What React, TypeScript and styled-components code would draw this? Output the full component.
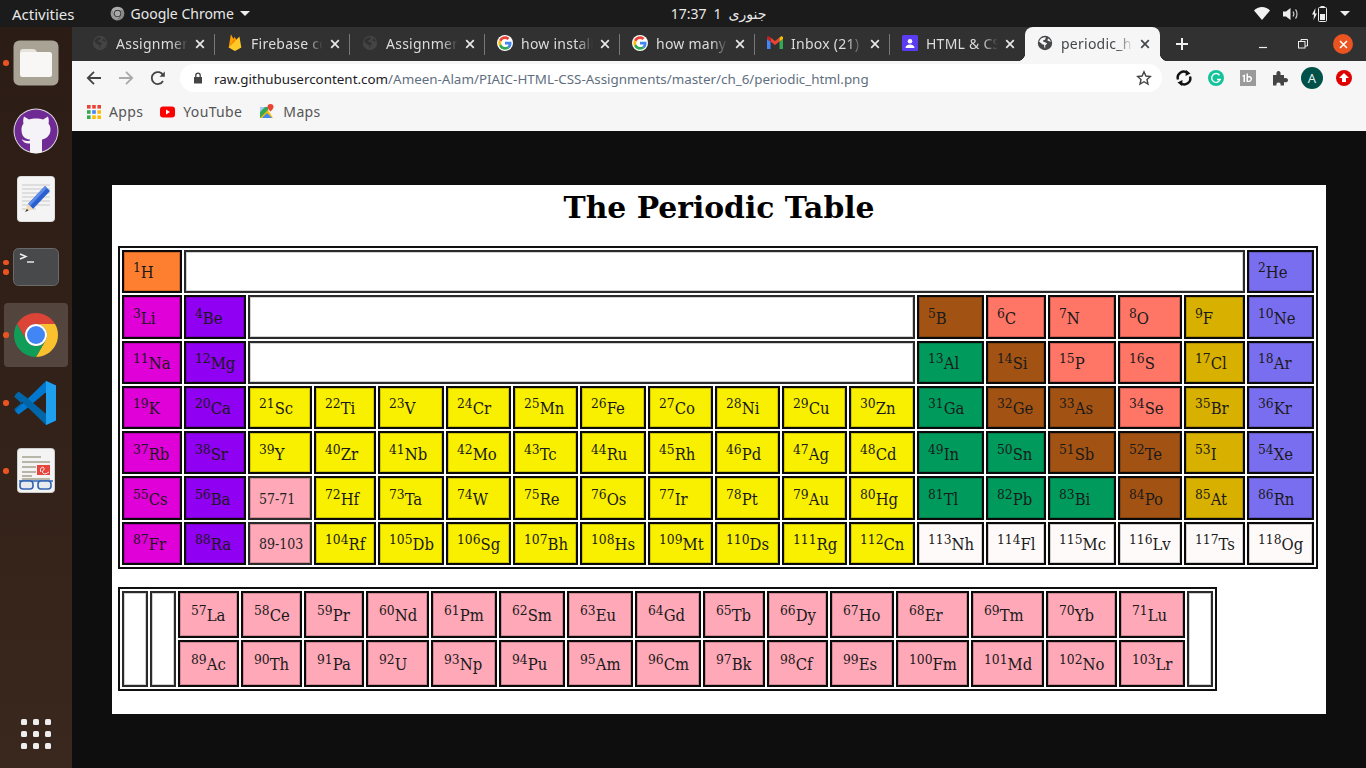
import React from "react";
import styled, { createGlobalStyle } from "styled-components";

const UI_FONT = `"Noto Sans", "DejaVu Sans", sans-serif`;

const Global = createGlobalStyle`
  html, body { margin: 0; padding: 0; background: #0e0e0e; }
  * { box-sizing: border-box; }
`;

const Screen = styled.div`
  width: 1366px; height: 768px; overflow: hidden;
  display: flex; flex-direction: column;
  font-family: ${UI_FONT};
`;

/* ---------- top bar ---------- */
const TopBar = styled.header`
  height: 27px; flex: none; background: #1b1b1b; color: #e8e8e8;
  font-size: 14px; display: grid; grid-template-columns: 1fr auto 1fr; align-items: center;
  padding: 0 16px 0 12px;
`;
const TopLeft = styled.div`display: flex; align-items: center; font-size: 15px;`;
const TopApp = styled.div`display: flex; align-items: center; gap: 6px; margin-left: 35px; font-size: 14px;`;
const Clock = styled.div`display: flex; align-items: center; gap: 7px; margin-left: 75px;`;
const TopRight = styled.div`display: flex; align-items: center; justify-content: flex-end; gap: 13px;`;
const Caret = styled.span`
  width: 0; height: 0; border-left: 5px solid transparent; border-right: 5px solid transparent;
  border-top: 5px solid #eee; display: inline-block;
`;

const Body = styled.div`flex: 1; display: flex; min-height: 0;`;

/* ---------- dock ---------- */
const Dock = styled.nav`
  width: 72px; flex: none; background: linear-gradient(180deg, #2b1c15 0%, #3a271d 100%);
  display: flex; flex-direction: column; align-items: center; padding-top: 4px;
`;
const DockItem = styled.div<{ $active?: boolean }>`
  position: relative; width: 64px; height: 64px; margin-bottom: 4px; border-radius: 4px;
  display: flex; align-items: center; justify-content: center;
  background: ${p => (p.$active ? "rgba(255,255,255,.17)" : "transparent")};
`;
const DockDots = styled.div`
  position: absolute; left: -1px; top: 0; bottom: 0; display: flex; flex-direction: column;
  justify-content: center; gap: 4px;
`;
const DockDot = styled.i`display: block; width: 5.5px; height: 5.5px; border-radius: 50%; background: #e95420;`;
const ShowApps = styled.div`
  margin-top: auto; margin-bottom: 19px; display: grid; grid-template-columns: repeat(3, 6px);
  gap: 6px;
`;
const ShowAppsDot = styled.i`display: block; height: 6px; border-radius: 1.5px; background: #eee;`;

/* ---------- browser ---------- */
const Browser = styled.main`flex: 1; display: flex; flex-direction: column; min-width: 0;`;
const TabStrip = styled.div`
  height: 34px; flex: none; background: #323132; display: flex; align-items: stretch; padding-left: 8px;
  position: relative;
`;
const Tab = styled.div<{ $active?: boolean; $noSep?: boolean }>`
  width: 135px; position: relative; display: flex; align-items: center; padding-left: 12px; padding-bottom: 2px;
  border-radius: 8px 8px 0 0; color: ${p => (p.$active ? "#45474a" : "#dcdcdc")}; font-size: 14px;
  background: ${p => (p.$active ? "#f6f6f6" : "transparent")};
  &::after {
    content: ""; position: absolute; right: 0; top: 7px; bottom: 6px; width: 1px;
    background: ${p => (p.$noSep || p.$active ? "transparent" : "#77767a")};
  }
`;
const Flare = styled.i<{ $side: "left" | "right" }>`
  position: absolute; bottom: 0; width: 8px; height: 8px;
  ${p => (p.$side === "left"
    ? "left: -8px; background: radial-gradient(circle at 0 0, transparent 8px, #f6f6f6 8.5px);"
    : "right: -8px; background: radial-gradient(circle at 100% 0, transparent 8px, #f6f6f6 8.5px);")}
`;
const Fav = styled.span`width: 16px; height: 16px; flex: none; display: flex; align-items: center; justify-content: center;`;
const TabTitle = styled.span`
  margin-left: 8px; width: 72px; overflow: hidden; white-space: nowrap; letter-spacing: .25px;
  -webkit-mask-image: linear-gradient(90deg, #000 78%, transparent 100%);
  mask-image: linear-gradient(90deg, #000 78%, transparent 100%);
`;
const TabClose = styled.span`position: absolute; left: 114px; top: 11px; width: 12px; height: 12px; display: flex;`;
const NewTab = styled.div`width: 44px; display: flex; align-items: center; justify-content: center;`;
const WinControls = styled.div`
  position: absolute; right: 13px; top: 0; bottom: 0; display: flex; align-items: center; gap: 20px;
`;
const WinBtn = styled.span`width: 20px; height: 20px; display: flex; align-items: center; justify-content: center;`;
const CloseBtn = styled(WinBtn)`border-radius: 50%; background: #e95420;`;

const Toolbar = styled.div`
  height: 34px; flex: none; background: #f6f6f6; display: flex; align-items: center; padding-left: 6px;
`;
const NavBtn = styled.span`width: 32px; height: 32px; display: flex; align-items: center; justify-content: center;`;
const Omnibox = styled.div`
  width: 982px; height: 28px; margin-left: 6px; border-radius: 14px; background: #fff;
  display: flex; align-items: center; padding: 0 10px 0 12px; font-size: 13.4px; color: #5f6f80;
`;
const Host = styled.span`color: #1c2024;`;
const UrlText = styled.span`margin-left: 10px; padding-top: 1px; flex: 1; white-space: nowrap;`;
const Exts = styled.div`display: flex; align-items: center; margin-left: 6px;`;
const Ext = styled.span`width: 32px; height: 32px; display: flex; align-items: center; justify-content: center;`;
const Avatar = styled.span`
  width: 22px; height: 22px; border-radius: 50%; background: #00514a; color: #e6f0ee;
  font-size: 13px; display: flex; align-items: center; justify-content: center;
`;
const Bookmarks = styled.div`
  height: 36px; flex: none; background: #f6f6f6; display: flex; align-items: center; padding: 0 0 3px 15px;
  color: #555; font-size: 14px; letter-spacing: .35px; gap: 17px;
`;
const Bookmark = styled.div`display: flex; align-items: center; gap: 8px;`;

/* ---------- image viewer ---------- */
const Viewer = styled.section`
  flex: 1; background: #0e0e0e; display: flex; align-items: center; justify-content: center;
`;
const Sheet = styled.div`
  width: 1214px; height: 529px; background: #fff; padding: 0 6px;
  font-family: "DejaVu Serif Condensed", "DejaVu Serif", "Liberation Serif", serif; color: #1a1a1a;
`;
const Title = styled.h1`
  margin: 0; height: 61px; padding-bottom: 16px; display: flex; align-items: center; justify-content: center;
  font-family: "DejaVu Serif", serif;
  font-size: 29.8px; font-weight: 700; color: #000; width: 1202px;
`;
const PTable = styled.div<{ $cols: number[]; $rows: string }>`
  grid-template-columns: ${p => p.$cols.map(c => `${c}px`).join(" ")};
  grid-template-rows: ${p => p.$rows};
  gap: 2px; padding: 2px; border: 2px solid #111;
  outline: 1px solid rgba(0,0,0,.15); outline-offset: -1px;
`;
const MainTable = styled(PTable)`display: grid; width: 1200px;`;
const LowerTable = styled(PTable)`display: grid; width: 1099px; margin-top: 18px;`;
const Cell = styled.div<{ $bg: string; $span?: number; $rowSpan?: number; $pad?: number; $soft?: boolean }>`
  grid-column: span ${p => p.$span ?? 1};
  grid-row: span ${p => p.$rowSpan ?? 1};
  background: ${p => p.$bg};
  border: 2px solid ${p => (p.$soft ? "#2a2a2a" : "#0a0a0a")};
  box-shadow: inset 0 0 0 1px rgba(0,0,0,.18);
  display: flex; align-items: center; white-space: nowrap;
  padding-left: ${p => p.$pad ?? 9}px; padding-top: 4px; font-size: 16.5px; line-height: 1;
`;
const Sup = styled.sup`font-size: 13.7px; line-height: 0; vertical-align: 6px;`;
const Plain = styled.span`font-size: 14px; color: #222; margin-top: -3px;`;

/* ---------- data ---------- */
const C = {
  orange: "#ff7f30", magenta: "#e000d8", purple: "#9000f2", yellow: "#f9f000", green: "#009b5c",
  brown: "#a25213", salmon: "#ff7566", gold: "#d8b000", blue: "#7a6ef0", pink: "#ffa8b8",
  snow: "#fffafa", blank: "#fff",
};
const G = (c: string, ...items: string[]) => items.map(s => [s, c] as [string, string]);

type Item = [string, string] | { blank: number } | { range: string };
const mainRows: Item[][] = [
  [["1 H", C.orange], { blank: 16 }, ["2 He", C.blue]],
  [["3 Li", C.magenta], ["4 Be", C.purple], { blank: 10 }, ["5 B", C.brown], ["6 C", C.salmon], ["7 N", C.salmon], ["8 O", C.salmon], ["9 F", C.gold], ["10 Ne", C.blue]],
  [["11 Na", C.magenta], ["12 Mg", C.purple], { blank: 10 }, ["13 Al", C.green], ["14 Si", C.brown], ["15 P", C.salmon], ["16 S", C.salmon], ["17 Cl", C.gold], ["18 Ar", C.blue]],
  [["19 K", C.magenta], ["20 Ca", C.purple], ...G(C.yellow, "21 Sc", "22 Ti", "23 V", "24 Cr", "25 Mn", "26 Fe", "27 Co", "28 Ni", "29 Cu", "30 Zn"), ["31 Ga", C.green], ["32 Ge", C.brown], ["33 As", C.brown], ["34 Se", C.salmon], ["35 Br", C.gold], ["36 Kr", C.blue]],
  [["37 Rb", C.magenta], ["38 Sr", C.purple], ...G(C.yellow, "39 Y", "40 Zr", "41 Nb", "42 Mo", "43 Tc", "44 Ru", "45 Rh", "46 Pd", "47 Ag", "48 Cd"), ["49 In", C.green], ["50 Sn", C.green], ["51 Sb", C.brown], ["52 Te", C.brown], ["53 I", C.gold], ["54 Xe", C.blue]],
  [["55 Cs", C.magenta], ["56 Ba", C.purple], { range: "57-71" }, ...G(C.yellow, "72 Hf", "73 Ta", "74 W", "75 Re", "76 Os", "77 Ir", "78 Pt", "79 Au", "80 Hg"), ["81 Tl", C.green], ["82 Pb", C.green], ["83 Bi", C.green], ["84 Po", C.brown], ["85 At", C.gold], ["86 Rn", C.blue]],
  [["87 Fr", C.magenta], ["88 Ra", C.purple], { range: "89-103" }, ...G(C.yellow, "104 Rf", "105 Db", "106 Sg", "107 Bh", "108 Hs", "109 Mt", "110 Ds", "111 Rg", "112 Cn"), ...G(C.snow, "113 Nh", "114 Fl", "115 Mc", "116 Lv", "117 Ts", "118 Og")],
];
const lanth = "57 La,58 Ce,59 Pr,60 Nd,61 Pm,62 Sm,63 Eu,64 Gd,65 Tb,66 Dy,67 Ho,68 Er,69 Tm,70 Yb,71 Lu".split(",");
const actin = "89 Ac,90 Th,91 Pa,92 U,93 Np,94 Pu,95 Am,96 Cm,97 Bk,98 Cf,99 Es,100 Fm,101 Md,102 No,103 Lr".split(",");
const mainCols = [60,62,64,62,66,65,65,66,65,65,65,66,67,60,68,64,61,67];
const lowerCols = [26,26,61,61,60,63,66,66,66,66,62,61,64,73,73,71,66,26];

const Element: React.FC<{ s: string; bg: string; pad?: number }> = ({ s, bg, pad }) => {
  const [n, sym] = s.split(" ");
  return <Cell $bg={bg} $pad={pad}><span><Sup>{n}</Sup>{sym}</span></Cell>;
};

/* ---------- icons ---------- */
const Chrome: React.FC<{ size: number; gray?: boolean }> = ({ size, gray }) => (
  <svg width={size} height={size} viewBox="0 0 48 48">
    <path fill={gray ? "#aaa" : "#db4437"} d="M4.95 13A22 22 0 0 1 43.05 13L24 13A11 11 0 0 0 14.47 29.5Z" />
    <path fill={gray ? "#888" : "#fbc02d"} d="M43.05 13A22 22 0 0 1 24 46L33.53 29.5A11 11 0 0 0 24 13Z" />
    <path fill={gray ? "#999" : "#0f9d58"} d="M24 46A22 22 0 0 1 4.95 13L14.47 29.5A11 11 0 0 0 33.53 29.5Z" />
    <circle cx="24" cy="24" r="11" fill={gray ? "#333" : "#fff"} />
    <circle cx="24" cy="24" r="9" fill={gray ? "#aaa" : "#4285f4"} />
  </svg>
);
const Globe: React.FC<{ c: string; cut: string }> = ({ c, cut }) => (
  <svg width="16" height="16" viewBox="0 0 16 16">
    <circle cx="8" cy="8" r="7.2" fill={c} />
    <path fill={cut} d="M7 2.2 4 3.4 2 6.4l3.6 3.2 1.6.2v2.2l1 1.6V10.6l2-2.2-2.6-1.4L6 6.6V5.4l2-.6 1-2.2zM11 3.6l-.6 2 2.4 1 1 .2c-.2-1.4-1.4-2.6-2.8-3.2z" />
  </svg>
);
const GIcon = () => (
  <svg width="16" height="16" viewBox="0 0 48 48">
    <circle cx="24" cy="24" r="24" fill="#fff" />
    <path fill="#ea4335" d="M24 12c3 0 5.600 1 7.700 3l5.700-5.700C33.900 6 29.400 4 24 4 16.200 4 9.500 8.500 6.200 15l6.700 5.200C14.500 15.400 18.900 12 24 12z" />
    <path fill="#4285f4" d="M43.500 24.500c0-1.400-.1-2.700-.4-4H24v8h11c-.5 2.500-1.900 4.700-4.100 6.100l6.400 5c3.800-3.500 6.200-8.700 6.200-15.100z" />
    <path fill="#fbbc05" d="M12.900 28.700c-.4-1.300-.7-2.800-.7-4.300s.3-3 .7-4.300L6.200 15C4.800 17.800 4 20.800 4 24s.8 6.200 2.200 9l6.700-4.300z" />
    <path fill="#34a853" d="M24 44c5.400 0 9.900-1.800 13.300-4.800l-6.400-5c-1.800 1.200-4.100 1.900-6.900 1.900-5.100 0-9.500-3.400-11.100-8.100L6.200 33C9.500 39.500 16.200 44 24 44z" />
  </svg>
);
const XMark: React.FC<{ c: string; s?: number }> = ({ c, s = 12 }) => (
  <svg width={s} height={s} viewBox="0 0 12 12"><path d="M2.200 2.200l7.600 7.600M9.800 2.200l-7.600 7.600" stroke={c} strokeWidth="1.700" /></svg>
);
const Firebase = () => (
  <svg width="16" height="18" viewBox="0 0 16 20">
    <path fill="#ffa000" d="M1 15 3.300 1.200c.1-.3.500-.4.600-.1L6.300 5.500 7.300 3.600c.1-.2.400-.2.500 0L15 15z" />
    <path fill="#f57c00" d="M9 9 7.300 5.500 1 15z" />
    <path fill="#ffca28" d="M15 15 13 3.400c0-.3-.4-.4-.6-.2L1 15l6.300 3.600c.4.200.9.200 1.300 0z" />
  </svg>
);
const Gmail = () => (
  <svg width="16" height="14" viewBox="0 0 16 14">
    <path fill="#4285f4" d="M0 3v10h3.500V5.500z" />
    <path fill="#34a853" d="M12.500 5.500V13H16V3z" />
    <path fill="#ea4335" d="M3.500 5.500 8 9l4.500-3.500V1.500L8 5 3.500 1.500z" />
    <path fill="#c5221f" d="M0 3l3.500 2.500v-4L2 .5C1 0 0 .8 0 2z" />
    <path fill="#fbbc04" d="M16 3l-3.500 2.500v-4l1.500-1c1-.5 2 .3 2 1.500z" />
  </svg>
);
const PurpleBadge = () => (
  <svg width="16" height="16" viewBox="0 0 16 16">
    <rect width="16" height="16" rx="1.500" fill="#5b3cf0" />
    <circle cx="8" cy="6.300" r="2.300" fill="#fff" />
    <path fill="#fff" d="M3.500 13c0-2.300 2-3.500 4.500-3.500s4.500 1.200 4.500 3.500z" />
  </svg>
);
const Wifi = () => (<svg width="16" height="13" viewBox="0 0 16 13"><path fill="#f2f2f2" d="M0 3.500C2 1.500 5 0 8 0s6 1.500 8 3.500L8 13z" /></svg>);
const Speaker = () => (
  <svg width="16" height="14" viewBox="0 0 16 14">
    <path fill="#eee" d="M0 4.500h3L7.500 1v12L3 9.500H0z" />
    <path fill="none" stroke="#ccc" strokeWidth="1.200" d="M10 4.500c1 1.400 1 3.600 0 5M12.500 2.500c2 2.400 2 6.600 0 9" />
  </svg>
);
const Battery = () => (
  <svg width="15" height="16" viewBox="0 0 15 16">
    <path fill="#eee" d="M3.500 2 0 8.500h2L1.500 14 5 7.500H3z" />
    <rect x="6.500" y="1.500" width="8" height="14" rx="1" fill="none" stroke="#eee" />
    <rect x="8.500" y="0" width="4" height="1.500" fill="#eee" />
    <rect x="8" y="8" width="5" height="6" fill="#eee" />
  </svg>
);
const LockIcon = () => (
  <svg width="12" height="12" viewBox="0 0 12 12">
    <path fill="#444" d="M2 5h8v6.500H2z" />
    <path fill="none" stroke="#444" strokeWidth="1.300" d="M3.800 5V3.400a2.200 2.200 0 0 1 4.400 0V5" />
  </svg>
);
const Arrow: React.FC<{ c: string; flip?: boolean }> = ({ c, flip }) => (
  <svg width="16" height="16" viewBox="0 0 16 16" style={flip ? { transform: "scaleX(-1)" } : undefined}>
    <path fill="none" stroke={c} strokeWidth="1.800" d="M15 8H2M8 1.800 1.800 8 8 14.200" />
  </svg>
);
const Reload = () => (
  <svg width="16" height="16" viewBox="0 0 16 16">
    <path fill="none" stroke="#444" strokeWidth="1.800" d="M13 11a6 6 0 1 1 .2-5.500" />
    <path fill="#444" d="M14.800 1.500v5.300H9.500z" />
  </svg>
);
const Star = () => (
  <svg width="16" height="16" viewBox="0 0 16 16">
    <path fill="none" stroke="#444" strokeWidth="1.400" d="M8 1.800l1.900 4.200 4.500.5-3.400 3 1 4.500L8 11.700 4 14l1-4.500-3.400-3 4.500-.5z" />
  </svg>
);
const LoopExt = () => (
  <svg width="18" height="18" viewBox="0 0 18 18" fill="none" stroke="#111" strokeWidth="2.400">
    <path d="M3 10.500A6 6 0 0 1 12.500 4" />
    <path d="M15 7.500A6 6 0 0 1 5.500 14" />
    <path fill="#111" stroke="none" d="M11 1l4.500 3.500L10.500 7zM7 17l-4.500-3.500 5-2.500z" />
  </svg>
);
const Grammarly = () => (
  <svg width="16" height="16" viewBox="0 0 16 16">
    <circle cx="8" cy="8" r="8" fill="#15c39a" />
    <path fill="none" stroke="#fff" strokeWidth="1.400" d="M11.500 5.200A4.400 4.400 0 1 0 12.200 9.500H9" />
  </svg>
);
const OneB = () => (
  <svg width="16" height="16" viewBox="0 0 16 16">
    <rect width="16" height="16" fill="#9a9a9a" />
    <path fill="#fff" d="M2.500 5.500 5 4.500V12H3.500V6.500l-1 .3zM6.500 3.500H8v3c1.800-1 4-.2 4 2.200 0 2-1.700 3.400-3.800 3.400-.6 0-1.200-.1-1.700-.2zM8 8v2.800c1.500.3 2.500-.6 2.500-1.800 0-1.300-1.400-1.800-2.500-1z" />
  </svg>
);
const Puzzle = () => (
  <svg width="16" height="16" viewBox="0 0 16 16">
    <path fill="#444" d="M1 5h3.500C4 2.500 5 1 6.500 1S9 2.500 8.500 5H12v3.300c2.500-.6 4 .4 4 1.900s-1.500 2.500-4 1.900V15.500H8.500c.5-2-.5-3-2-3s-2.500 1-2 3H1z" />
  </svg>
);
const RedUp = () => (
  <svg width="16" height="16" viewBox="0 0 16 16">
    <circle cx="8" cy="8" r="8" fill="#e00000" />
    <path fill="#fff" d="M8 3l5 5h-3v4H6V8H3z" />
  </svg>
);
const AppsIcon = () => {
  const cols = ["#ea4335", "#ea4335", "#ea4335", "#34a853", "#4285f4", "#fbbc05", "#34a853", "#fbbc05", "#fbbc05"];
  return (
    <svg width="14" height="14" viewBox="0 0 14 14">
      {cols.map((c, i) => <rect key={i} x={(i % 3) * 5.2} y={Math.floor(i / 3) * 5.2} width="3.600" height="3.600" fill={c} />)}
    </svg>
  );
};
const YouTube = () => (
  <svg width="15" height="12" viewBox="0 0 15 12">
    <rect width="15" height="11" y=".5" rx="3" fill="#f00" />
    <path fill="#fff" d="M6 3.500 10 6 6 8.500z" />
  </svg>
);
const MapsIcon = () => (
  <svg width="16" height="16" viewBox="0 0 16 16">
    <path fill="#34a853" d="M1 3h8v4L3 14H1z" />
    <path fill="#fbbc05" d="M1 14 9 6l5 8z" />
    <path fill="#4285f4" d="M3 14l5-5 5 5z" />
    <path fill="#a8c7fa" d="M1 3h5L1 8z" />
    <path fill="#ea4335" d="M11.500 0a3 3 0 0 1 3 3c0 2-3 4.500-3 4.500s-3-2.500-3-4.500a3 3 0 0 1 3-3z" />
  </svg>
);

const Files = () => (
  <svg width="46" height="46" viewBox="0 0 46 46">
    <rect x=".5" y=".5" width="45" height="45" rx="6" fill="#a8a395" />
    <path fill="#e6e3de" d="M7 12c0-2 1-3 3-3h10c2 0 3 1 4 3h-2v5H7z" />
    <rect x="7" y="12" width="32" height="25" rx="2.500" fill="#f8f7f6" />
  </svg>
);
const GitHubDock = () => (
  <svg width="46" height="46" viewBox="0 0 46 46">
    <circle cx="23" cy="23" r="22.500" fill="#dcdcdc" />
    <circle cx="23" cy="23" r="21.500" fill="#702a94" />
    <path fill="#f6f3f8" d="M11 8.500 16 11.500c4-1.200 10-1.200 14 0l5-3c1 2.500 1 5 .5 7 1.500 2 2 4 2 6 0 7-5.500 9.500-8.500 10v12.800a21 21 0 0 1-12 0V35.500c-4 .5-6.500-1-8.500-4.500 3 2 5.500 2 8 2l.5-1.500C11 31 8.500 27.500 8.500 21.500c0-2 .5-4 2-6-.5-2-.5-4.500.5-7z" />
  </svg>
);
const Gedit = () => (
  <svg width="38" height="46" viewBox="0 0 38 46">
    <rect x=".5" y=".5" width="37" height="45" rx="3" fill="#f4f4f4" stroke="#ddd" />
    <path stroke="#c8c8c8" d="M5 9h28M5 13h28M5 17h28M5 21h28M5 25h28M5 29h28M5 33h14" />
    <path fill="#2a5fd0" d="M11 28 28 10l5 5-17 18z" />
    <path fill="#5d8be8" d="M11 28 28 10l2 2L13 30z" />
    <path fill="#f3d9b4" d="M11 28l5 5-8 3z" />
    <path fill="#333" d="M8 36l2-3 1.500 1.500z" />
  </svg>
);
const Terminal = () => (
  <svg width="46" height="38" viewBox="0 0 46 38">
    <rect x=".5" y=".5" width="45" height="37" rx="5" fill="#48494b" stroke="#6a6a6a" />
    <path fill="none" stroke="#f2f2f2" strokeWidth="1.400" d="M7 6l6 2.500L7 11" />
    <path stroke="#f2f2f2" strokeWidth="1.400" d="M14 14h7" />
  </svg>
);
const VSCode = () => (
  <svg width="44" height="44" viewBox="0 0 44 44">
    <path fill="#0065a9" d="M0 15.500 4 12l10 8-4 4.500zM0 28.500 4 32l10-8-4-4.500z" />
    <path fill="#0078d0" d="M32 0 42 4.500v5L31 12 12 28 4.500 33.500 1 30z" />
    <path fill="#0065a9" d="M1 14l3.500-3.500L12 16l19 16 11 2.500v5L32 44z" />
    <path fill="#1fa0ee" d="M32 0l10 4.500v35L32 44z" />
  </svg>
);
const Evince = () => (
  <svg width="38" height="46" viewBox="0 0 38 46">
    <rect x=".5" y=".5" width="37" height="44" rx="3" fill="#f3f3f3" stroke="#ccc" />
    <path stroke="#b8b4a6" strokeWidth="2" d="M5 9h19M5 14h28M5 19h14M5 24h14M5 28h10M5 31h28" />
    <rect x="20" y="17" width="13" height="10" fill="#e8453c" />
    <path fill="none" stroke="#fff" d="M24 24c-2-4 2-6 3-4s-3 3-1 5 4 0 6-1" />
    <g fill="none" stroke="#3064b0" strokeWidth="1.600">
      <path d="M2 33h34" /><rect x="3" y="33" width="13" height="8" rx="3" fill="#e8ebee" /><rect x="21" y="33" width="13" height="8" rx="3" fill="#e8ebee" />
    </g>
  </svg>
);

/* ---------- app ---------- */
type TabDef = { t: string; fav: React.ReactNode };
const tabs: TabDef[] = [
  { t: "Assignment", fav: <Globe c="#444" cut="#323132" /> },
  { t: "Firebase cons", fav: <Firebase /> },
  { t: "Assignment", fav: <Globe c="#444" cut="#323132" /> },
  { t: "how install", fav: <GIcon /> },
  { t: "how many", fav: <GIcon /> },
  { t: "Inbox (21)", fav: <Gmail /> },
  { t: "HTML & CSS", fav: <PurpleBadge /> },
];

const DockEntry: React.FC<{ dots?: number; active?: boolean; children: React.ReactNode }> = ({ dots = 0, active, children }) => (
  <DockItem $active={active}>
    {dots > 0 && <DockDots>{Array.from({ length: dots }).map((_, i) => <DockDot key={i} />)}</DockDots>}
    {children}
  </DockItem>
);

export default function App() {
  return (
    <Screen>
      <Global />
      <TopBar>
        <TopLeft>
          Activities
          <TopApp><Chrome size={15} gray /> Google Chrome <Caret /></TopApp>
        </TopLeft>
        <Clock><span>17:37</span><span>1</span><span>جنوری</span></Clock>
        <TopRight><Wifi /><Speaker /><Battery /><Caret /></TopRight>
      </TopBar>
      <Body>
        <Dock>
          <DockEntry dots={1}><Files /></DockEntry>
          <DockEntry><GitHubDock /></DockEntry>
          <DockEntry><Gedit /></DockEntry>
          <DockEntry dots={2}><Terminal /></DockEntry>
          <DockEntry dots={1} active><Chrome size={48} /></DockEntry>
          <DockEntry dots={1}><VSCode /></DockEntry>
          <DockEntry dots={1}><Evince /></DockEntry>
          <ShowApps>{Array.from({ length: 9 }).map((_, i) => <ShowAppsDot key={i} />)}</ShowApps>
        </Dock>
        <Browser>
          <TabStrip>
            {tabs.map((t, i) => (
              <Tab key={i} $noSep={i === tabs.length - 1}>
                <Fav>{t.fav}</Fav>
                <TabTitle>{t.t}</TabTitle>
                <TabClose><XMark c="#e8e8e8" /></TabClose>
              </Tab>
            ))}
            <Tab $active>
              <Flare $side="left" /><Flare $side="right" />
              <Fav><Globe c="#45474a" cut="#f6f6f6" /></Fav>
              <TabTitle>periodic_html</TabTitle>
              <TabClose><XMark c="#45474a" /></TabClose>
            </Tab>
            <NewTab>
              <svg width="14" height="14" viewBox="0 0 14 14"><path d="M7 1v12M1 7h12" stroke="#f0f0f0" strokeWidth="2" /></svg>
            </NewTab>
            <WinControls>
              <WinBtn><svg width="10" height="10" viewBox="0 0 10 10"><path d="M1 8.500h8" stroke="#eee" strokeWidth="1.200" /></svg></WinBtn>
              <WinBtn><svg width="10" height="10" viewBox="0 0 10 10" fill="none" stroke="#eee"><rect x=".5" y="2.500" width="6.500" height="6.500" /><path d="M3 2.500V.5h6.500V7H7" /></svg></WinBtn>
              <CloseBtn><XMark c="#fff" s={11} /></CloseBtn>
            </WinControls>
          </TabStrip>
          <Toolbar>
            <NavBtn><Arrow c="#444" /></NavBtn>
            <NavBtn><Arrow c="#aaa" flip /></NavBtn>
            <NavBtn><Reload /></NavBtn>
            <Omnibox>
              <LockIcon />
              <UrlText><Host>raw.githubusercontent.com</Host>/Ameen-Alam/PIAIC-HTML-CSS-Assignments/master/ch_6/periodic_html.png</UrlText>
              <Star />
            </Omnibox>
            <Exts>
              <Ext><LoopExt /></Ext>
              <Ext><Grammarly /></Ext>
              <Ext><OneB /></Ext>
              <Ext><Puzzle /></Ext>
              <Ext><Avatar>A</Avatar></Ext>
              <Ext><RedUp /></Ext>
            </Exts>
          </Toolbar>
          <Bookmarks>
            <Bookmark><AppsIcon /> Apps</Bookmark>
            <Bookmark><YouTube /> YouTube</Bookmark>
            <Bookmark><MapsIcon /> Maps</Bookmark>
          </Bookmarks>
          <Viewer>
            <Sheet>
              <Title>The Periodic Table</Title>
              <MainTable $cols={mainCols} $rows="repeat(7, 43.3px)">
                {mainRows.flat().map((it, i) => {
                  if ("blank" in it) return <Cell key={i} $bg={C.blank} $span={it.blank} $soft />;
                  if ("range" in it) return <Cell key={i} $bg={C.pink} $soft><Plain>{it.range}</Plain></Cell>;
                  return <Element key={i} s={it[0]} bg={it[1]} />;
                })}
              </MainTable>
              <LowerTable $cols={lowerCols} $rows="repeat(2, 47px)">
                <Cell $bg={C.blank} $rowSpan={2} $soft />
                <Cell $bg={C.blank} $rowSpan={2} $soft />
                {lanth.map(s => <Element key={s} s={s} bg={C.pink} pad={11} />)}
                <Cell $bg={C.blank} $rowSpan={2} $soft />
                {actin.map(s => <Element key={s} s={s} bg={C.pink} pad={11} />)}
              </LowerTable>
            </Sheet>
          </Viewer>
        </Browser>
      </Body>
    </Screen>
  );
}
